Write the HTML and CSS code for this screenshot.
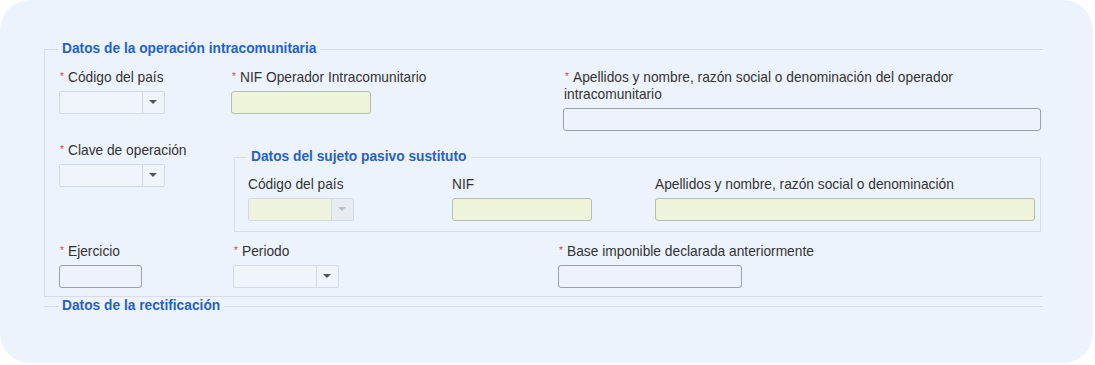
FILE: index.html
```html
<!DOCTYPE html>
<html lang="es">
<head>
    <meta charset="UTF-8">
    <title>Datos de la operación intracomunitaria</title>
    <link rel="stylesheet" href="styles.css">
</head>
<body>
<div class="card">
    <fieldset class="group">
        <legend class="group-title">Datos de la operación intracomunitaria</legend>

        <div class="row row-first">
            <div class="field col-a">
                <label class="field-label"><span class="req">*</span>Código del país</label>
                <div class="select"><span class="select-value"></span><span class="select-arrow"></span></div>
            </div>
            <div class="field col-b">
                <label class="field-label"><span class="req">*</span>NIF Operador Intracomunitario</label>
                <div class="input input-green input-nif"></div>
            </div>
            <div class="field col-c">
                <label class="field-label"><span class="req">*</span>Apellidos y nombre, razón social o denominación del operador intracomunitario</label>
                <div class="input input-name"></div>
            </div>
        </div>

        <div class="row row-second">
            <div class="field col-a2">
                <label class="field-label"><span class="req">*</span>Clave de operación</label>
                <div class="select"><span class="select-value"></span><span class="select-arrow"></span></div>
            </div>
            <fieldset class="subgroup">
                <legend class="group-title">Datos del sujeto pasivo sustituto</legend>
                <div class="sub-row">
                    <div class="field sub-a">
                        <label class="field-label">Código del país</label>
                        <div class="select select-disabled"><span class="select-value"></span><span class="select-arrow"></span></div>
                    </div>
                    <div class="field sub-b">
                        <label class="field-label">NIF</label>
                        <div class="input input-green input-nif"></div>
                    </div>
                    <div class="field sub-c">
                        <label class="field-label">Apellidos y nombre, razón social o denominación</label>
                        <div class="input input-green input-subname"></div>
                    </div>
                </div>
            </fieldset>
        </div>

        <div class="row row-third">
            <div class="field col-a3">
                <label class="field-label"><span class="req">*</span>Ejercicio</label>
                <div class="input input-year"></div>
            </div>
            <div class="field col-b3">
                <label class="field-label"><span class="req">*</span>Periodo</label>
                <div class="select"><span class="select-value"></span><span class="select-arrow"></span></div>
            </div>
            <div class="field col-c3">
                <label class="field-label"><span class="req">*</span>Base imponible declarada anteriormente</label>
                <div class="input input-base"></div>
            </div>
        </div>
    </fieldset>

    <fieldset class="group group-closed">
        <legend class="group-title">Datos de la rectificación</legend>
    </fieldset>
</div>
</body>
</html>
```

FILE: styles.css
```css
* {
    box-sizing: border-box;
}

body {
    margin: 0;
    background: #ffffff;
    font-family: "Liberation Sans", Arial, sans-serif;
    font-size: 13.75px;
    color: #333333;
}

.card {
    width: 1093px;
    height: 363px;
    border-radius: 30px;
    background: #edf3fc;
    padding: 41px 50px 0 44px;
}

/* bloques con título */
.group {
    margin: 0;
    padding: 11px 2px 8px 14px;
    border: 1px solid #d6dde7;
    border-right: none;
    min-width: 0;
}

.group-title {
    margin-left: -1px;
    padding: 0 4px;
    line-height: 16px;
    font-size: 13.75px;
    font-weight: bold;
    color: #2662c2;
}

.group-closed {
    margin-top: 1px;
    padding: 0;
    border: none;
    border-top: 1px solid #d6dde7;
}

.group-closed .group-title {
    margin-left: 14px;
}

.row {
    display: flex;
    align-items: flex-start;
}

.row-second {
    margin-top: 10px;
}

.row-third {
    margin-top: 10px;
}

.field-label {
    display: block;
    line-height: 17px;
    margin-bottom: 5px;
}

.req {
    display: inline-block;
    width: 9px;
    padding-left: 1px;
    color: #d9433f;
    font-size: 10px;
    vertical-align: 2px;
}

.col-a { width: 172px; }
.col-b { width: 332px; }
.col-c { flex: 1; }
.col-a2 { width: 175px; }
.col-a3 { width: 174px; }
.col-b3 { width: 325px; }
.col-c3 { flex: 1; }

.col-c .field-label {
    padding-left: 1px;
    padding-right: 70px;
}

/* controles */
.select {
    display: flex;
    width: 106px;
    height: 23px;
    border: 1px solid #d3dae3;
    border-radius: 2px;
    background: #f0f5fc;
}

.select-value {
    flex: 1;
}

.select-arrow {
    width: 22px;
    border-left: 1px solid #d3dae3;
    position: relative;
}

.select-arrow::after {
    content: "";
    position: absolute;
    left: 6px;
    top: 8px;
    border-left: 4px solid transparent;
    border-right: 4px solid transparent;
    border-top: 4px solid #4d5560;
}

.select-disabled .select-value {
    background: #edf3dc;
}

.select-disabled .select-arrow {
    background: #e7ecf2;
}

.select-disabled .select-arrow::after {
    border-top-color: #b9c0c8;
}

.input {
    height: 23px;
    border: 1px solid #9aa1a9;
    border-radius: 3px;
    background: #eef3fb;
}

.input-green {
    background: #eef4d9;
    border-color: #b9bfae;
}

.input-nif { width: 140px; }
.input-name { width: 478px; }
.input-year { width: 83px; }
.input-base { width: 184px; }
.input-subname { width: 380px; }

.subgroup {
    flex: 1;
    margin: 8px 0 0 0;
    padding: 11px 5px 10px 13px;
    border: 1px solid #d6dde7;
    min-width: 0;
}

.sub-row {
    display: flex;
}

.sub-a { width: 204px; }
.sub-b { width: 203px; }
.sub-c { flex: 1; }
```
